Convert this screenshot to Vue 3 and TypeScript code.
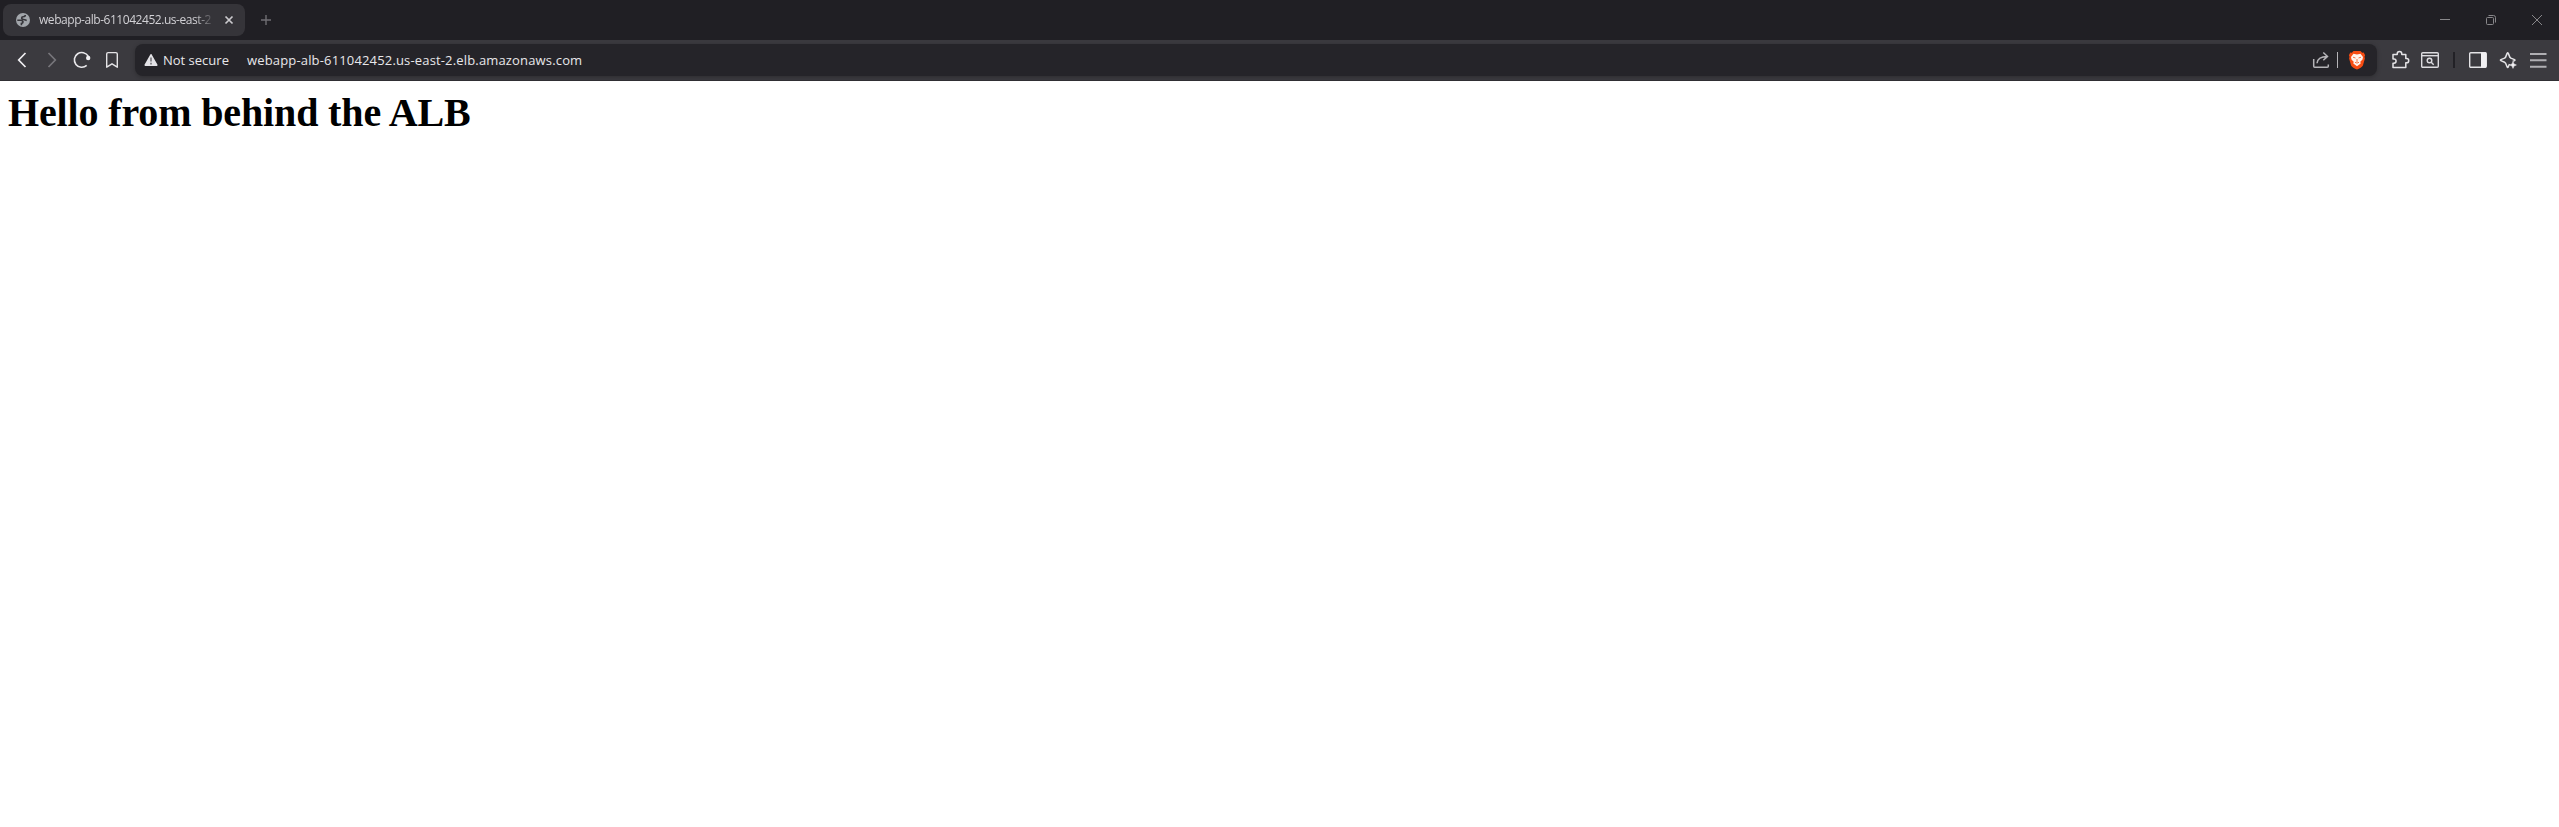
<script setup lang="ts">
const tabTitle = 'webapp-alb-611042452.us-east-2'
const address = 'webapp-alb-611042452.us-east-2.elb.amazonaws.com'
const security = 'Not secure'
const heading = 'Hello from behind the ALB'
</script>

<template>
  <div class="window">
    <header class="titlebar">
      <div class="tab">
        <svg class="globe" width="16" height="16" viewBox="0 0 16 16">
          <circle cx="8" cy="8" r="7" fill="#a2a6ab" />
          <path d="M2.300 8.200H5.300c1.600 0 2.700.6 2.700 1.700s-.7 1.400-1.600 1.500v1.800" fill="none" stroke="#36353a" stroke-width="1.600" />
          <path d="M10.300 3c0 1.300-1 1.700-2.300 1.700-1 0-1.300.6-1.300 1.200 0 1 .8 1.600 1.900 1.600 1.700 0 2.100.9 3.100.9" fill="none" stroke="#36353a" stroke-width="1.600" />
        </svg>
        <span class="tab-title">{{ tabTitle }}</span>
        <svg class="tab-close" width="10" height="10" viewBox="0 0 10 10">
          <path d="M1.500 1.500l7 7M8.500 1.500l-7 7" stroke="#cbcace" stroke-width="1.700" />
        </svg>
      </div>
      <svg class="new-tab" width="12" height="12" viewBox="0 0 12 12">
        <path d="M6 1v10M1 6h10" stroke="#6f6e73" stroke-width="1.400" />
      </svg>
      <div class="controls">
        <span class="control">
          <svg width="12" height="12" viewBox="0 0 12 12"><path d="M1 5.500h10" stroke="#88878a" /></svg>
        </span>
        <span class="control">
          <svg width="12" height="12" viewBox="0 0 12 12" fill="none" stroke="#88878a">
            <rect x="1.500" y="3.500" width="7" height="7" rx="1" />
            <path d="M3.500 1.500h5a2 2 0 0 1 2 2v5" />
          </svg>
        </span>
        <span class="control">
          <svg width="12" height="12" viewBox="0 0 12 12"><path d="M1 1l10 10M11 1L1 11" stroke="#88878a" /></svg>
        </span>
      </div>
    </header>

    <nav class="toolbar">
      <span class="slot">
        <svg width="20" height="20" viewBox="0 0 20 20"><path d="M13.500 3L6.700 10l6.800 7" fill="none" stroke="#f0eff2" stroke-width="1.700" /></svg>
      </span>
      <span class="slot">
        <svg width="20" height="20" viewBox="0 0 20 20"><path d="M6.500 3l6.800 7-6.800 7" fill="none" stroke="#77767b" stroke-width="1.700" /></svg>
      </span>
      <span class="slot">
        <svg width="20" height="20" viewBox="0 0 20 20">
          <path d="M14.700 15.400A7.400 7.400 0 1 1 16.200 6.200" fill="none" stroke="#e9e8eb" stroke-width="1.600" />
          <circle cx="16.200" cy="8" r="2.200" fill="#f0eff2" />
        </svg>
      </span>
      <span class="slot">
        <svg width="20" height="20" viewBox="0 0 20 20"><path d="M4.700 17.200V4a1.400 1.400 0 0 1 1.400-1.400h7.800A1.400 1.400 0 0 1 15.300 4v13.200L10 13.800z" fill="none" stroke="#e4e3e6" stroke-width="1.400" stroke-linejoin="round" /></svg>
      </span>

      <div class="address-bar">
        <svg class="warning" width="16" height="16" viewBox="0 0 16 16">
          <path d="M8 2.800l5.800 10.300H2.200z" fill="#e3e2e6" stroke="#e3e2e6" stroke-width="1.600" stroke-linejoin="round" />
          <path d="M8 5.500v4M8 10.800v1.700" stroke="#6c6b70" stroke-width="1.500" />
        </svg>
        <span class="security">{{ security }}</span>
        <span class="address">{{ address }}</span>
        <span class="slot share">
          <svg width="20" height="20" viewBox="0 0 20 20" fill="none" stroke="#b5b4b8" stroke-width="1.500">
            <path d="M2.700 9v7.300a1 1 0 0 0 1 1h12.600a1 1 0 0 0 1-1V14.500" />
            <path d="M6 13.300c.3-4.300 3-6.800 10.300-6.900M12.300 2.500l4.200 3.900-4.200 3.900" />
          </svg>
        </span>
        <span class="bar-divider"></span>
        <span class="slot">
          <svg width="20" height="20" viewBox="0 0 20 20">
            <path d="M6.500 1h7l1.700 1.700 1.500-.1 1.400 2.600-.6 1.600.4 1.600-2 7c-.5 1.500-3.500 3-5.900 4-2.400-1-5.400-2.500-5.900-4l-2-7 .4-1.600-.6-1.600 1.400-2.600 1.500.1z" fill="#f74c12" />
            <path d="M6.500 3.800l3.500.6 3.500-.6L16 7l-.5 2.500-2.200 2.200.4 1.900L10 16.300l-3.700-2.700.4-1.900-2.200-2.200L4 7z" fill="#fff3ed" />
            <path d="M6 7.200l2.500.8M14 7.200l-2.500.8M8 12.300l2 .8 2-.8M10 9v3" stroke="#f5703f" stroke-width="1" fill="none" />
          </svg>
        </span>
      </div>

      <span class="slot">
        <svg width="20" height="20" viewBox="0 0 20 20"><path d="M3 4.500h4.200V3.900a2.300 2.300 0 0 1 4.600 0v.6h4v4.100h.8a2.100 2.100 0 0 1 0 4.200h-.8v4.700H3v-4.200h.9a2.200 2.200 0 0 0 0-4.400H3z" fill="none" stroke="#e4e3e6" stroke-width="1.500" stroke-linejoin="round" /></svg>
      </span>
      <span class="slot">
        <svg width="20" height="20" viewBox="0 0 20 20" fill="none" stroke="#dddce0" stroke-width="1.400">
          <rect x="1.700" y="2.700" width="16.600" height="14.600" rx="1" />
          <path d="M2 5.700h16" />
          <circle cx="9.500" cy="10.500" r="2.300" />
          <path d="M11.200 12.200l2.500 2.500" />
        </svg>
      </span>
      <span class="tool-divider"></span>
      <span class="slot">
        <svg width="20" height="20" viewBox="0 0 20 20">
          <rect x="1.700" y="2.700" width="16.600" height="14.600" rx="1" fill="none" stroke="#e4e3e6" stroke-width="1.400" />
          <path d="M13 2.500h5v15h-5z" fill="#f0eff2" />
        </svg>
      </span>
      <span class="slot">
        <svg width="20" height="20" viewBox="0 0 20 20">
          <path d="M11.500 14l-1.300 3c-.2.500-.8.500-1 0l-1.600-3.700-1-1L2.800 10.600c-.5-.2-.5-.8 0-1l3.800-1.500 1-1 1.600-4c.2-.6.800-.6 1 0l1.600 4 1 1 3.800 1.500c.5.200.5.800 0 1l-2 .8" fill="none" stroke="#e4e3e6" stroke-width="1.500" stroke-linejoin="round" />
          <path d="M15 11.800l1 2.200 2.400 1-2.400 1-1 2.400-1-2.400-2.400-1 2.400-1z" fill="#f0eff2" stroke="#f0eff2" stroke-width=".5" />
        </svg>
      </span>
      <span class="slot">
        <svg width="20" height="20" viewBox="0 0 20 20"><path d="M2 4h16.500M2 10.300h16.500M2 16.700h16.500" stroke="#b0afb3" stroke-width="1.900" /></svg>
      </span>
    </nav>

    <main class="page">
      <h1>{{ heading }}</h1>
    </main>
  </div>
</template>

<style>
body {
  margin: 0;
  background: #fff;
}
</style>

<style scoped>
.window {
  height: 827px;
  display: flex;
  flex-direction: column;
  background: #fff;
  font-family: "Open Sans", "Noto Sans", sans-serif;
  overflow: hidden;
}
svg {
  display: block;
  flex: none;
}
.titlebar {
  height: 40px;
  flex: none;
  box-sizing: border-box;
  display: flex;
  align-items: center;
  padding-left: 3px;
  background: #201f24;
}
.tab {
  width: 242px;
  height: 32px;
  box-sizing: border-box;
  display: flex;
  align-items: center;
  padding: 0 11px 0 12px;
  border-radius: 8px;
  background: #353439;
}
.tab-title {
  width: 178px;
  margin-left: 8px;
  white-space: nowrap;
  font-size: 12px;
  line-height: 18px;
  letter-spacing: -0.45px;
  color: #d2d1d5;
  mask-image: linear-gradient(to right, #000 156px, transparent 176px);
}
.tab-close {
  margin-left: auto;
}
.new-tab {
  margin-left: 15px;
}
.controls {
  display: flex;
  margin-left: auto;
  margin-right: -1px;
}
.control {
  width: 46px;
  height: 40px;
  display: flex;
  align-items: center;
  justify-content: center;
}
.toolbar {
  height: 41px;
  flex: none;
  box-sizing: border-box;
  display: flex;
  align-items: center;
  padding: 0 6px 0 7px;
  background: #3b3a3f;
  border-bottom: 1px solid #302f34;
}
.slot {
  width: 30px;
  height: 32px;
  flex: none;
  display: flex;
  align-items: center;
  justify-content: center;
}
.address-bar {
  flex: 1;
  height: 32px;
  box-sizing: border-box;
  display: flex;
  align-items: center;
  margin: 0 8px;
  padding: 0 5px 0 8px;
  border-radius: 8px;
  background: #252429;
  box-shadow: 0 1px 4px rgba(0, 0, 0, 0.25);
  white-space: nowrap;
  font-size: 13px;
  line-height: 20px;
  color: #e8e7ea;
}
.security {
  width: 84px;
  margin-left: 4px;
}
.address {
  letter-spacing: 0.16px;
}
.share {
  margin-left: auto;
}
.bar-divider {
  width: 1px;
  height: 16px;
  margin: 0 4px 0 1px;
  background: #b5b4b8;
}
.tool-divider {
  width: 2px;
  height: 16px;
  margin: 0 8px;
  background: #222126;
}
.page {
  flex: 1;
  padding: 9px 8px 8px;
}
h1 {
  margin: 0;
  font-family: "Liberation Serif", "Times New Roman", serif;
  font-size: 40px;
  line-height: 46px;
  font-weight: 700;
  letter-spacing: -0.14px;
  color: #000;
}
</style>
